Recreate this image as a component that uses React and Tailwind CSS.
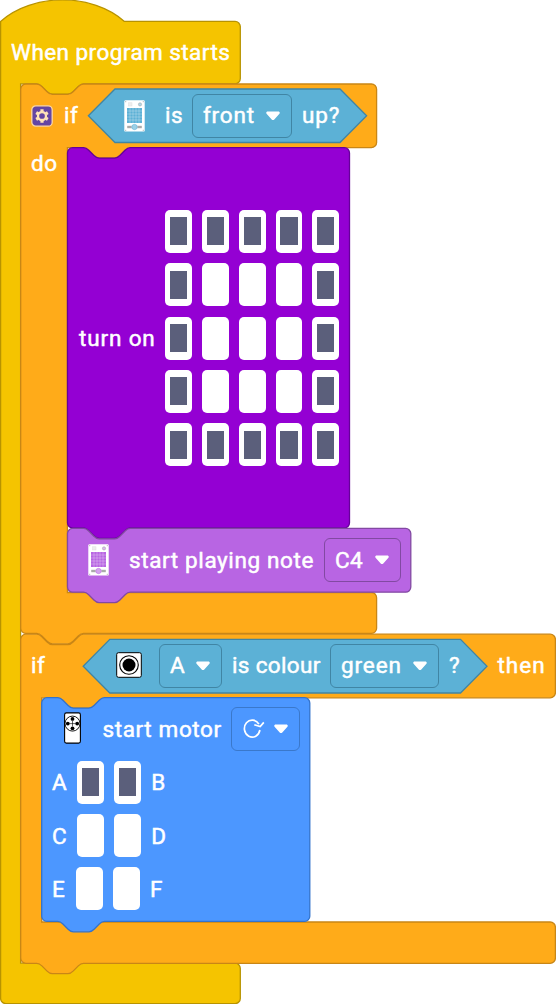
import React from "react";

const NOTCH_R = "c2.6 0 3.9 1.3 5.2 2.6l5.2 5.2c1.3 1.3 2.6 2.6 5.2 2.6h15.6c2.6 0 3.9-1.3 5.2-2.6l5.2-5.2c1.3-1.3 2.6-2.6 5.2-2.6";
const NOTCH_L = "c-2.6 0-3.9 1.3-5.2 2.6l-5.2 5.2c-1.3 1.3-2.6 2.6-5.2 2.6h-15.6c-2.6 0-3.9-1.3-5.2-2.6l-5.2-5.2c-1.3-1.3-2.6-2.6-5.2-2.6";

const TR = "a5.2 5.2 0 0 1 5.2 5.2";
const BR = "a5.2 5.2 0 0 1-5.2 5.2";

function stackPath(l, t, r, b) {
  return `M${l} ${t + 5.2}a5.2 5.2 0 0 1 5.2-5.2H${l + 16}${NOTCH_R}H${r - 5.2}${TR}V${b - 5.2}${BR}H${l + 62.8}${NOTCH_L}H${l + 5.2}a5.2 5.2 0 0 1-5.2-5.2Z`;
}

function wrapPath(l, t, r, rowBottom, inner, armTop, b) {
  return `M${l} ${t + 5.2}a5.2 5.2 0 0 1 5.2-5.2H${l + 16}${NOTCH_R}H${r - 5.2}${TR}V${rowBottom - 5.2}${BR}H${inner + 62.8}${NOTCH_L}H${inner}V${armTop}H${r - 5.2}${TR}V${b - 5.2}${BR}H${l + 62.8}${NOTCH_L}H${l + 5.2}a5.2 5.2 0 0 1-5.2-5.2Z`;
}

const HAT = `M.6 21.4c32-28.6 91.8-28.6 123.8 0H235.1a5.2 5.2 0 0 1 5.2 5.2V78.6a5.2 5.2 0 0 1-5.2 5.2H83.5${NOTCH_L}H20.6V963.2H235.1a5.2 5.2 0 0 1 5.2 5.2V998.4a5.2 5.2 0 0 1-5.2 5.2H5.8a5.2 5.2 0 0 1-5.2-5.2Z`;

function Block({ path, className, shape, children }) {
  return (
    <div className={`grid grid-cols-1 grid-rows-1 ${className}`}>
      <svg className={`h-full w-full overflow-visible [grid-area:1/1] ${shape}`} strokeWidth="1.3">
        <path d={path} />
      </svg>
      <div className="min-w-0 [grid-area:1/1]">{children}</div>
    </div>
  );
}

function Label({ className = "", children }) {
  return <span className={`mb-[2px] block shrink-0 whitespace-nowrap ${className}`}>{children}</span>;
}

function Arrow({ className = "" }) {
  return (
    <svg className={`h-[10px] w-[14px] shrink-0 ${className}`} viewBox="0 0 14 10" fill="white">
      <path d="M1.7.4H12.3C13.8.4 14.2 2 13.2 3.1L8.3 8.4C7.5 9.3 6.5 9.3 5.7 8.4L.8 3.1C-.2 2 .2.4 1.7.4Z" />
    </svg>
  );
}

function Field({ className, children }) {
  return (
    <div className={`flex h-[44px] shrink-0 items-center rounded-[6px] border-[1.3px] ${className}`}>
      {children}
    </div>
  );
}

function HubIcon({ tint, className = "" }) {
  return (
    <svg className={`h-8 w-[21px] shrink-0 ${className}`} viewBox="0 0 21 32">
      <rect x=".3" y=".2" width="20.4" height="31.4" rx="1.2" fill="white" />
      <rect x="3" y="8" width="15" height="15" fill={tint} />
      <path d="M6 8v15M9 8v15M12 8v15M15 8v15M3 11h15M3 14h15M3 17h15M3 20h15" stroke="white" strokeOpacity=".4" strokeWidth=".7" />
      <rect x="4.500" y="2.800" width="3.500" height="3.200" fill="#eee" stroke="#ddd" strokeWidth=".5" />
      <circle cx="16" cy="4.400" r="1.600" fill={tint} fillOpacity=".5" stroke="#aaa" strokeWidth=".6" />
      <path d="M3.200 27h14.600" stroke="#aaa" strokeWidth="2.400" />
      <circle cx="10.500" cy="27" r="2.900" fill="white" />
      <circle cx="10.500" cy="27" r="2.700" fill={tint} fillOpacity=".6" stroke={tint} strokeWidth=".5" />
      <path d="M1.300 1.700h.9M18.800 1.700h.9M1.300 30.300h.9M18.800 30.300h.9" stroke="#888" strokeWidth=".8" />
    </svg>
  );
}

function GearIcon() {
  return (
    <svg className="ml-[11px] h-[22px] w-[22px] shrink-0" viewBox="0 0 22 22">
      <rect x=".8" y=".8" width="20.400" height="20.400" rx="4" fill="#6445a3" stroke="#ffd9a0" strokeWidth="1.300" />
      <g fill="none" stroke="#ffe3b8">
        <circle cx="11" cy="11" r="4" strokeWidth="2.300" />
        <path d="M11 6.500V4.300M11 15.500v2.200M7.100 8.750 5.200 7.650M14.900 13.250l1.900 1.100M7.100 13.250l-1.900 1.100M14.900 8.750l1.900-1.100" strokeWidth="3.200" />
      </g>
    </svg>
  );
}

function SensorIcon() {
  return (
    <svg className="mb-[2px] ml-[33px] h-[26px] w-[26px] shrink-0" viewBox="0 0 26 26">
      <rect x=".7" y=".7" width="24.600" height="24.600" rx="1.800" fill="white" stroke="black" strokeWidth="1" />
      <circle cx="13" cy="13" r="9.300" fill="white" stroke="black" strokeWidth="1.100" />
      <circle cx="13" cy="13" r="6.500" />
    </svg>
  );
}

function MotorIcon() {
  return (
    <svg className="mb-px ml-[22.500px] h-[32px] w-[17px] shrink-0" viewBox="0 0 17 32">
      <rect x=".6" y=".9" width="15.800" height="30.200" rx="1.800" fill="white" stroke="black" strokeWidth="1.100" />
      <circle cx="8.500" cy="11.600" r="7.500" fill="white" stroke="black" strokeWidth=".9" />
      <path d="M8.500 8.800v5.600M5.700 11.600h5.600" stroke="black" strokeWidth=".6" />
      <circle cx="8.500" cy="6.900" r="1.900" />
      <circle cx="8.500" cy="16.300" r="1.900" />
      <circle cx="3.800" cy="11.600" r="1.900" />
      <circle cx="13.200" cy="11.600" r="1.900" />
    </svg>
  );
}

function ClockwiseIcon() {
  return (
    <svg className="ml-[10px] h-[22px] w-[23px] shrink-0" viewBox="0 0 23 22" fill="none" stroke="white">
      <path d="M16.900 6.200A7.800 8.500 0 1 0 17.900 12" strokeWidth="1.700" />
      <path d="M12.300 6.800 18.200 8.600 21.800 4.400" strokeWidth="1.700" />
    </svg>
  );
}

function Cell({ on }) {
  return (
    <div className="flex h-[43px] w-[26.7px] shrink-0 items-center justify-center rounded-[5px] bg-white">
      {on && <div className="h-[28px] w-[17.3px] bg-[#5b5f7b]" />}
    </div>
  );
}

const MATRIX = ["11111", "10001", "10001", "10001", "11111"];

function MotorRow({ left, right, on, leftClass, rightClass }) {
  return (
    <div className="flex h-[53.4px] items-center pl-[11px]">
      <Label className={`pt-[2px] ${leftClass}`}>{left}</Label>
      <div className="flex gap-[10.200px]">
        <Cell on={on} />
        <Cell on={on} />
      </div>
      <Label className={`pt-[2px] ${rightClass}`}>{right}</Label>
    </div>
  );
}

function Hex({ path, className, children }) {
  return (
    <div className={`grid h-[54px] shrink-0 grid-cols-1 grid-rows-1 ${className}`}>
      <svg className="h-full w-full overflow-visible fill-[#5cb1d6] stroke-[#4085a4] [grid-area:1/1]" strokeWidth="1.3">
        <path d={path} />
      </svg>
      <div className="flex items-center [grid-area:1/1]">{children}</div>
    </div>
  );
}

const ORANGE = "fill-[#ffab19] stroke-[#c98616]";

export default function App() {
  return (
    <main className="h-[1004px] w-[556px] overflow-hidden bg-white font-['Roboto',sans-serif] text-[22.5px] leading-[26px] font-normal text-white [-webkit-text-stroke:0.5px_white]">
      <Block path={HAT} className="h-[1004px] w-[556px]" shape="fill-[#f5c400] stroke-[#b89300]">
        <div className="flex h-[84px] items-center pt-[21px] pl-[11px]">
          <Label className="tracking-[0.44px]">When program starts</Label>
        </div>
        <div className="flex flex-col pl-[20px]">
          <Block path={wrapPath(0.7, 0, 356.6, 63.6, 47.4, 508.5, 549.4)} className="h-[549.500px] w-[536px]" shape={ORANGE}>
            <div className="flex h-[64px] items-center">
              <GearIcon />
              <Label className="ml-[11px] w-[24px] tracking-[0.5px]">if</Label>
              <Hex className="w-[279px]" path="M.4 26.800 27 0H252L278.600 26.800 252 53.500H27Z">
                <HubIcon tint="#5cb1d6" className="mb-px ml-[36px]" />
                <Label className="ml-[20px] w-[27px] tracking-[0.5px]">is</Label>
                <Field className="w-[100px] border-[#4085a4]">
                  <Label className="ml-[10px] w-[63px] tracking-[0.8px]">front</Label>
                  <Arrow />
                </Field>
                <Label className="ml-[10px] tracking-[0.9px]">up?</Label>
              </Hex>
            </div>
            <div className="flex">
              <Label className="w-[47px] pt-[2px] pl-[11px] tracking-[0.6px]">do</Label>
              <div className="flex flex-col">
                <Block path={stackPath(0.500, -0.300, 282.500, 380)} className="h-[380px] w-[283px]" shape="fill-[#9400d3] stroke-[#66009a]">
                  <div className="flex h-full items-center pl-[12px]">
                    <Label className="w-[86.300px] pt-[2px] tracking-[0.85px]">turn on</Label>
                    <div className="flex flex-col gap-[10.350px]">
                      {MATRIX.map((row, i) => (
                        <div key={i} className="flex gap-[10.100px]">
                          {row.split("").map((c, j) => (
                            <Cell key={j} on={c === "1"} />
                          ))}
                        </div>
                      ))}
                    </div>
                  </div>
                </Block>
                <Block path={stackPath(0.500, 0.400, 343.800, 64.200)} className="h-[64px] w-[344px]" shape="fill-[#b865e3] stroke-[#8249a2]">
                  <div className="flex h-full items-center">
                    <HubIcon tint="#b865e3" className="ml-[21px]" />
                    <Label className="ml-[20px] w-[195px] pt-[2px] tracking-[0.62px]">start playing note</Label>
                    <Field className="w-[77px] border-[#8249a2]">
                      <Label className="ml-[10px] w-[40px] pt-[2px] tracking-[0.3px]">C4</Label>
                      <Arrow />
                    </Field>
                  </div>
                </Block>
              </div>
            </div>
          </Block>
          <Block path={wrapPath(0.7, 0.2, 535.4, 63.800, 21.700, 288, 329.300)} className="h-[330px] w-[536px]" shape={ORANGE}>
            <div className="flex h-[64px] items-center">
              <Label className="ml-[11px] w-[52px] tracking-[0.5px]">if</Label>
              <Hex className="w-[404px]" path="M.2 27.200 26.800.4H377.500L404 27.200 377.500 54H26.800Z">
                <SensorIcon />
                <Field className="ml-[17px] w-[63px] border-[#4085a4]">
                  <Label className="ml-[10px] w-[26px]">A</Label>
                  <Arrow />
                </Field>
                <Label className="ml-[10px] w-[98px] tracking-[0.35px]">is colour</Label>
                <Field className="w-[109px] border-[#4085a4]">
                  <Label className="ml-[10px] w-[72px] tracking-[0.9px]">green</Label>
                  <Arrow />
                </Field>
                <Label className="ml-[10px]">?</Label>
              </Hex>
              <Label className="ml-[10.500px] tracking-[1px]">then</Label>
            </div>
            <div className="pl-[21px]">
              <Block path={stackPath(0.700, -0.300, 268.800, 223.400)} className="h-[224px] w-[269px]" shape="fill-[#4c97ff] stroke-[#3373cc]">
                <div className="flex h-[58px] items-center pt-[4px]">
                  <MotorIcon />
                  <Label className="ml-[22px] w-[128.500px] pt-[2px] tracking-[0.62px]">start motor</Label>
                  <Field className="w-[69px] border-[#3a78cb]">
                    <ClockwiseIcon />
                    <Arrow className="ml-[9px]" />
                  </Field>
                </div>
                <MotorRow left="A" right="B" on leftClass="w-[25.300px]" rightClass="ml-[10.500px]" />
                <MotorRow left="C" right="D" leftClass="w-[25.300px]" rightClass="ml-[10.500px]" />
                <MotorRow left="E" right="F" leftClass="w-[24px]" rightClass="ml-[10.500px]" />
              </Block>
            </div>
          </Block>
        </div>
      </Block>
    </main>
  );
}
